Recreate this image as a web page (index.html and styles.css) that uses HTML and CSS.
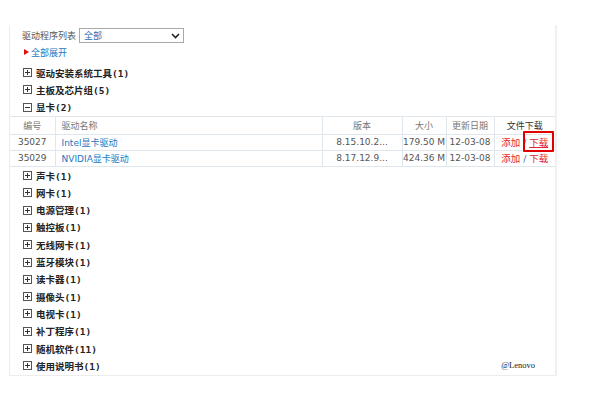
FILE: index.html
```html
<!DOCTYPE html>
<html lang="zh-CN">
<head>
<meta charset="utf-8">
<title>驱动程序列表</title>
<link rel="stylesheet" href="styles.css">
</head>
<body>
<div class="panel">
  <div class="filter">
    <span class="filter-label">驱动程序列表</span>
    <div class="select">
      <span class="select-value">全部</span>
      <svg class="chev" width="9" height="6" viewBox="0 0 9 6"><path d="M1 1 L4.5 4.5 L8 1" fill="none" stroke="#222" stroke-width="1.6"/></svg>
    </div>
  </div>
  <div class="expand"><span class="tri"></span><span class="expand-text">全部展开</span></div>

  <ul class="tree first">
    <li class="node"><svg class="ico" width="9" height="9" viewBox="0 0 9 9"><rect x="0.5" y="0.5" width="8" height="8" fill="#fff" stroke="#555"/><path d="M2 4.5 H7 M4.5 2 V7" stroke="#333"/></svg><span class="label">驱动安装系统工具(1)</span></li>
    <li class="node"><svg class="ico" width="9" height="9" viewBox="0 0 9 9"><rect x="0.5" y="0.5" width="8" height="8" fill="#fff" stroke="#555"/><path d="M2 4.5 H7 M4.5 2 V7" stroke="#333"/></svg><span class="label">主板及芯片组(5)</span></li>
    <li class="node"><svg class="ico" width="9" height="9" viewBox="0 0 9 9"><rect x="0.5" y="0.5" width="8" height="8" fill="#fff" stroke="#555"/><path d="M2 4.5 H7" stroke="#333"/></svg><span class="label">显卡(2)</span></li>
  </ul>

  <table class="drivers">
    <colgroup>
      <col class="c-id"><col class="c-name"><col class="c-ver"><col class="c-size"><col class="c-date"><col class="c-dl">
    </colgroup>
    <thead>
      <tr><th>编号</th><th class="left">驱动名称</th><th>版本</th><th>大小</th><th>更新日期</th><th class="dark">文件下载</th></tr>
    </thead>
    <tbody>
      <tr><td>35027</td><td class="left"><a class="link">Intel显卡驱动</a></td><td>8.15.10.2...</td><td>179.50 M</td><td>12-03-08</td><td><a class="red">添加</a> <span class="sep">/</span> <a class="red under mark">下载</a></td></tr>
      <tr><td>35029</td><td class="left"><a class="link">NVIDIA显卡驱动</a></td><td>8.17.12.9...</td><td>424.36 M</td><td>12-03-08</td><td><a class="red">添加</a> <span class="sep">/</span> <a class="red">下载</a></td></tr>
    </tbody>
  </table>

  <ul class="tree">
    <li class="node"><svg class="ico" width="9" height="9" viewBox="0 0 9 9"><rect x="0.5" y="0.5" width="8" height="8" fill="#fff" stroke="#555"/><path d="M2 4.5 H7 M4.5 2 V7" stroke="#333"/></svg><span class="label">声卡(1)</span></li>
    <li class="node"><svg class="ico" width="9" height="9" viewBox="0 0 9 9"><rect x="0.5" y="0.5" width="8" height="8" fill="#fff" stroke="#555"/><path d="M2 4.5 H7 M4.5 2 V7" stroke="#333"/></svg><span class="label">网卡(1)</span></li>
    <li class="node"><svg class="ico" width="9" height="9" viewBox="0 0 9 9"><rect x="0.5" y="0.5" width="8" height="8" fill="#fff" stroke="#555"/><path d="M2 4.5 H7 M4.5 2 V7" stroke="#333"/></svg><span class="label">电源管理(1)</span></li>
    <li class="node"><svg class="ico" width="9" height="9" viewBox="0 0 9 9"><rect x="0.5" y="0.5" width="8" height="8" fill="#fff" stroke="#555"/><path d="M2 4.5 H7 M4.5 2 V7" stroke="#333"/></svg><span class="label">触控板(1)</span></li>
    <li class="node"><svg class="ico" width="9" height="9" viewBox="0 0 9 9"><rect x="0.5" y="0.5" width="8" height="8" fill="#fff" stroke="#555"/><path d="M2 4.5 H7 M4.5 2 V7" stroke="#333"/></svg><span class="label">无线网卡(1)</span></li>
    <li class="node"><svg class="ico" width="9" height="9" viewBox="0 0 9 9"><rect x="0.5" y="0.5" width="8" height="8" fill="#fff" stroke="#555"/><path d="M2 4.5 H7 M4.5 2 V7" stroke="#333"/></svg><span class="label">蓝牙模块(1)</span></li>
    <li class="node"><svg class="ico" width="9" height="9" viewBox="0 0 9 9"><rect x="0.5" y="0.5" width="8" height="8" fill="#fff" stroke="#555"/><path d="M2 4.5 H7 M4.5 2 V7" stroke="#333"/></svg><span class="label">读卡器(1)</span></li>
    <li class="node"><svg class="ico" width="9" height="9" viewBox="0 0 9 9"><rect x="0.5" y="0.5" width="8" height="8" fill="#fff" stroke="#555"/><path d="M2 4.5 H7 M4.5 2 V7" stroke="#333"/></svg><span class="label">摄像头(1)</span></li>
    <li class="node"><svg class="ico" width="9" height="9" viewBox="0 0 9 9"><rect x="0.5" y="0.5" width="8" height="8" fill="#fff" stroke="#555"/><path d="M2 4.5 H7 M4.5 2 V7" stroke="#333"/></svg><span class="label">电视卡(1)</span></li>
    <li class="node"><svg class="ico" width="9" height="9" viewBox="0 0 9 9"><rect x="0.5" y="0.5" width="8" height="8" fill="#fff" stroke="#555"/><path d="M2 4.5 H7 M4.5 2 V7" stroke="#333"/></svg><span class="label">补丁程序(1)</span></li>
    <li class="node"><svg class="ico" width="9" height="9" viewBox="0 0 9 9"><rect x="0.5" y="0.5" width="8" height="8" fill="#fff" stroke="#555"/><path d="M2 4.5 H7 M4.5 2 V7" stroke="#333"/></svg><span class="label">随机软件(11)</span></li>
    <li class="node"><svg class="ico" width="9" height="9" viewBox="0 0 9 9"><rect x="0.5" y="0.5" width="8" height="8" fill="#fff" stroke="#555"/><path d="M2 4.5 H7 M4.5 2 V7" stroke="#333"/></svg><span class="label">使用说明书(1)</span></li>
  </ul>

  <span class="watermark">@Lenovo</span>
</div>
</body>
</html>
```

FILE: styles.css
```css
html, body {
  margin: 0;
  padding: 0;
  background: #fff;
}

body {
  font-family: "DejaVu Sans", "Noto Sans CJK SC", sans-serif;
  color: #333;
  padding-top: 25px;
}

.panel {
  position: relative;
  box-sizing: border-box;
  width: 547px;
  height: 351px;
  margin: 0 0 0 9px;
  padding-top: 3px;
  border: 1px solid #ececec;
  border-top: none;
  box-shadow: 1px 1px 1px #f3f3f3;
}

.filter {
  display: flex;
  align-items: center;
  height: 15px;
  padding-left: 12px;
}

.filter-label {
  font-family: "Noto Sans CJK SC", sans-serif;
  font-size: 9px;
  color: #555;
  width: 57px;
}

.select {
  box-sizing: border-box;
  width: 105px;
  height: 15px;
  border: 1px solid #a9a9a9;
  display: flex;
  align-items: center;
  justify-content: space-between;
  padding: 0 3px 0 4px;
}

.select-value {
  font-family: "Noto Sans CJK SC", sans-serif;
  font-size: 9px;
  color: #2a6db5;
  line-height: 13px;
}

.chev {
  display: block;
}

.expand {
  display: flex;
  align-items: center;
  height: 14px;
  margin-top: 2px;
  padding-left: 14px;
}

.tri {
  width: 0;
  height: 0;
  border-top: 3.5px solid transparent;
  border-bottom: 3.5px solid transparent;
  border-left: 5px solid #e01010;
  margin-right: 2px;
}

.expand-text {
  font-family: "Noto Sans CJK SC", sans-serif;
  font-size: 9px;
  color: #1a78c2;
}

.tree {
  list-style: none;
  margin: 0;
  padding: 0 0 0 13px;
}

.tree.first {
  margin-top: 5px;
}

.node {
  display: flex;
  align-items: center;
  height: 17.3px;
}

.ico {
  display: block;
  flex: none;
  margin-right: 4px;
}

.label {
  font-family: "DejaVu Sans Mono", "Noto Sans CJK SC", monospace;
  font-weight: bold;
  font-size: 9.5px;
  color: #222;
}

.drivers {
  width: 545px;
  table-layout: fixed;
  border-collapse: collapse;
  font-family: "DejaVu Sans", "Noto Sans CJK SC", sans-serif;
  font-size: 9px;
}

.c-id { width: 45px; }
.c-name { width: 267px; }
.c-ver { width: 80px; }
.c-size { width: 44px; }
.c-date { width: 48px; }
.c-dl { width: 61px; }

.drivers th,
.drivers td {
  padding: 0;
  text-align: center;
  white-space: nowrap;
  overflow: visible;
  border-top: 1px solid #dfe6ec;
  border-bottom: 1px solid #dfe6ec;
  border-left: 1px solid #dfe6ec;
}

.drivers th:first-child,
.drivers td:first-child {
  border-left: none;
}

.drivers th {
  height: 17px;
  font-weight: normal;
  color: #777;
  font-family: "Noto Sans CJK SC", sans-serif;
}

.drivers th.dark {
  color: #333;
}

.drivers td {
  height: 15px;
  color: #555;
}

.drivers .left {
  text-align: left;
  padding-left: 6px;
}

.link {
  color: #1a78c2;
  font-family: "DejaVu Sans", "Noto Sans CJK SC", sans-serif;
}

.red {
  color: #e0262a;
  font-family: "Noto Sans CJK SC", sans-serif;
  font-size: 9.5px;
}

.under {
  text-decoration: underline;
}

.sep {
  color: #2a6db5;
}

.mark {
  position: relative;
}

.mark::after {
  content: "";
  position: absolute;
  left: -6px;
  top: -4px;
  width: 27px;
  height: 17px;
  border: 2px solid #e00000;
  border-radius: 1px;
}

.watermark {
  position: absolute;
  right: 20px;
  bottom: 5px;
  font-family: "Liberation Serif", "Times New Roman", serif;
  font-size: 8.5px;
  color: #222;
}
```
